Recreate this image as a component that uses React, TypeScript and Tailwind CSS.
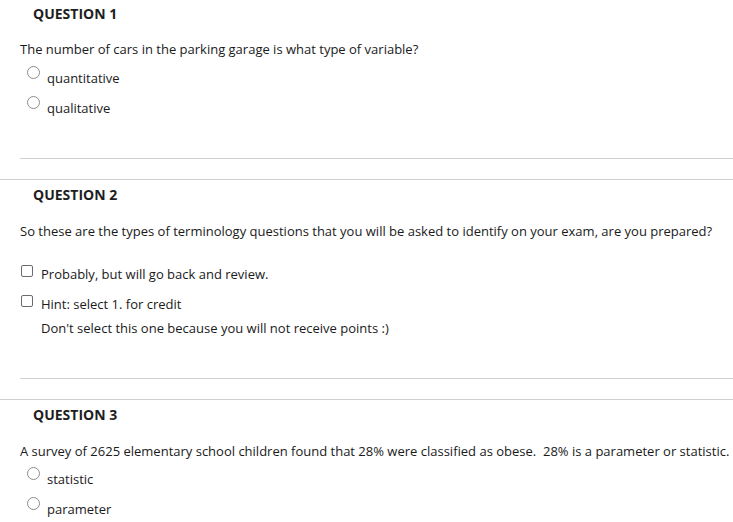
import React from 'react'

const font = { fontFamily: '"Open Sans", "Liberation Sans", sans-serif' }

const Radio = () => (
  <span className="mt-[-2px] block h-[13px] w-[13px] shrink-0 rounded-full border border-[#8d8d8d] bg-white" />
)

const Checkbox = () => (
  <span className="mt-[1px] block h-[12px] w-[12px] shrink-0 rounded-[2px] border-[1.5px] border-[#6b6b6b] bg-white" />
)

const Heading = ({ children, first }: { children: React.ReactNode; first?: boolean }) => (
  <div
    className={`flex items-center pl-[33px] text-[14px] font-bold text-[#1e1e1e] ${first ? 'h-[26px]' : 'h-[28px]'}`}
  >
    {children}
  </div>
)

const RadioOptions = ({ options, tight }: { options: string[]; tight?: boolean }) => (
  <div className={`flex flex-col gap-[10px] ${tight ? 'mt-[8px]' : 'mt-[9px]'}`}>
    {options.map((o) => (
      <div key={o} className="flex items-start pl-[27px]">
        <Radio />
        <span className="ml-[7px] leading-[20px]">{o}</span>
      </div>
    ))}
  </div>
)

export default function App() {
  return (
    <div className="min-h-[522px] w-full bg-white text-[13px] text-[#1a1a1a]" style={font}>
      {/* question 1 */}
      <section>
        <Heading first>QUESTION 1</Heading>
        <p className="mt-[13px] pl-[20px] leading-[20px]">
          The number of cars in the parking garage is what type of variable?
        </p>
        <RadioOptions options={['quantitative', 'qualitative']} />
        <div className="mt-[40px] ml-[20px] border-t border-[#d0d0d0]" />
        <div className="h-[20px]" />
      </section>

      {/* question 2 */}
      <section className="border-t border-[#d0d0d0]">
        <Heading>QUESTION 2</Heading>
        <p className="mt-[13px] pl-[20px] leading-[20px]">
          So these are the types of terminology questions that you will be asked to identify on your exam, are you prepared?
        </p>
        <div className="mt-[23px] flex flex-col gap-[10px]">
          <div className="flex items-start pl-[21px]">
            <Checkbox />
            <span className="ml-[8px] leading-[20px]">Probably, but will go back and review.</span>
          </div>
          <div className="flex items-start pl-[21px]">
            <Checkbox />
            <span className="ml-[8px] leading-[20px]">Hint: select 1. for credit</span>
          </div>
        </div>
        <p className="mt-[4px] pl-[41px] leading-[20px]">
          Don't select this one because you will not receive points :)
        </p>
        <div className="mt-[40px] ml-[20px] border-t border-[#d0d0d0]" />
        <div className="h-[20px]" />
      </section>

      {/* question 3 */}
      <section className="border-t border-[#d0d0d0]">
        <Heading>QUESTION 3</Heading>
        <p className="mt-[13px] pl-[20px] leading-[20px] whitespace-pre">
          {'A survey of 2625 elementary school children found that 28% were classified as obese.  28% is a parameter or statistic.'}
        </p>
        <RadioOptions options={['statistic', 'parameter']} tight />
      </section>
    </div>
  )
}
